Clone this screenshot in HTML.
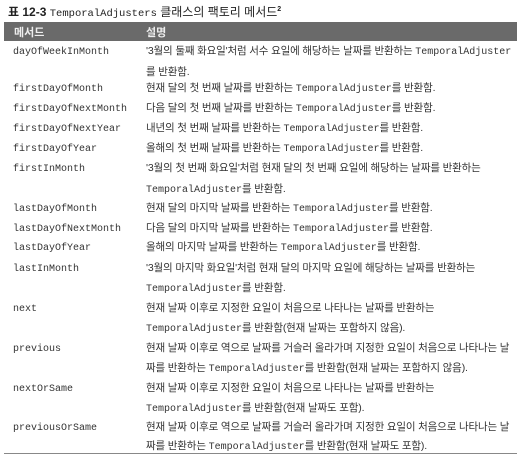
<!DOCTYPE html>
<html><head><meta charset="utf-8"><style>
body{margin:0;width:526px;height:455px;background:#fff;position:relative;overflow:hidden;font-family:"Liberation Sans","Noto Sans CJK KR",sans-serif;color:#333;}
.t{position:absolute;left:8px;top:3px;font-size:12px;color:#222;white-space:nowrap}
.t b{font-weight:bold}
.m{font-family:"Liberation Mono","Noto Sans CJK KR",monospace;font-size:10px;letter-spacing:0}
.hd{position:absolute;left:4px;top:22px;width:513px;height:19px;background:#6a6a6a}
.hd span{position:absolute;top:2px;color:#eee;font-size:11px;font-weight:bold}
.l{position:absolute;white-space:nowrap;font-size:10.5px;line-height:14px}
.c1{left:13px;font-family:"Liberation Mono",monospace;font-size:10px;color:#333;margin-top:2px}
.c2{left:146px;letter-spacing:-0.15px}
</style></head><body>
<div class="t"><b>표 12-3</b> <span class="m" style="font-size:10.5px">TemporalAdjusters</span> 클래스의 팩토리 메서드<sup style="font-size:7px;font-weight:bold">2</sup></div>
<div class="hd"><span style="left:10px">메서드</span><span style="left:142px">설명</span></div>

<div class="l c1" style="top:44px">dayOfWeekInMonth</div>
<div class="l c2" style="top:44px">'3월의 둘째 화요일'처럼 서수 요일에 해당하는 날짜를 반환하는 <span class="m">TemporalAdjuster</span></div>
<div class="l c2" style="top:65px">를 반환함.</div>

<div class="l c1" style="top:81px">firstDayOfMonth</div>
<div class="l c2" style="top:81px">현재 달의 첫 번째 날짜를 반환하는 <span class="m">TemporalAdjuster</span>를 반환함.</div>

<div class="l c1" style="top:101px">firstDayOfNextMonth</div>
<div class="l c2" style="top:101px">다음 달의 첫 번째 날짜를 반환하는 <span class="m">TemporalAdjuster</span>를 반환함.</div>

<div class="l c1" style="top:121px">firstDayOfNextYear</div>
<div class="l c2" style="top:121px">내년의 첫 번째 날짜를 반환하는 <span class="m">TemporalAdjuster</span>를 반환함.</div>

<div class="l c1" style="top:141px">firstDayOfYear</div>
<div class="l c2" style="top:141px">올해의 첫 번째 날짜를 반환하는 <span class="m">TemporalAdjuster</span>를 반환함.</div>

<div class="l c1" style="top:161px">firstInMonth</div>
<div class="l c2" style="top:161px">'3월의 첫 번째 화요일'처럼 현재 달의 첫 번째 요일에 해당하는 날짜를 반환하는</div>
<div class="l c2" style="top:182px"><span class="m">TemporalAdjuster</span>를 반환함.</div>

<div class="l c1" style="top:201px">lastDayOfMonth</div>
<div class="l c2" style="top:201px">현재 달의 마지막 날짜를 반환하는 <span class="m">TemporalAdjuster</span>를 반환함.</div>

<div class="l c1" style="top:221px">lastDayOfNextMonth</div>
<div class="l c2" style="top:221px">다음 달의 마지막 날짜를 반환하는 <span class="m">TemporalAdjuster</span>를 반환함.</div>

<div class="l c1" style="top:240px">lastDayOfYear</div>
<div class="l c2" style="top:240px">올해의 마지막 날짜를 반환하는 <span class="m">TemporalAdjuster</span>를 반환함.</div>

<div class="l c1" style="top:261px">lastInMonth</div>
<div class="l c2" style="top:261px">'3월의 마지막 화요일'처럼 현재 달의 마지막 요일에 해당하는 날짜를 반환하는</div>
<div class="l c2" style="top:281px"><span class="m">TemporalAdjuster</span>를 반환함.</div>

<div class="l c1" style="top:301px">next</div>
<div class="l c2" style="top:301px">현재 날짜 이후로 지정한 요일이 처음으로 나타나는 날짜를 반환하는</div>
<div class="l c2" style="top:321px"><span class="m">TemporalAdjuster</span>를 반환함(현재 날짜는 포함하지 않음).</div>

<div class="l c1" style="top:341px">previous</div>
<div class="l c2" style="top:341px">현재 날짜 이후로 역으로 날짜를 거슬러 올라가며 지정한 요일이 처음으로 나타나는 날</div>
<div class="l c2" style="top:361px">짜를 반환하는 <span class="m">TemporalAdjuster</span>를 반환함(현재 날짜는 포함하지 않음).</div>

<div class="l c1" style="top:381px">nextOrSame</div>
<div class="l c2" style="top:381px">현재 날짜 이후로 지정한 요일이 처음으로 나타나는 날짜를 반환하는</div>
<div class="l c2" style="top:401px"><span class="m">TemporalAdjuster</span>를 반환함(현재 날짜도 포함).</div>

<div class="l c1" style="top:420px">previousOrSame</div>
<div class="l c2" style="top:420px">현재 날짜 이후로 역으로 날짜를 거슬러 올라가며 지정한 요일이 처음으로 나타나는 날</div>
<div class="l c2" style="top:439px">짜를 반환하는 <span class="m">TemporalAdjuster</span>를 반환함(현재 날짜도 포함).</div>

<div style="position:absolute;left:4px;top:453px;width:513px;height:1px;background:#888"></div>
</body></html>
